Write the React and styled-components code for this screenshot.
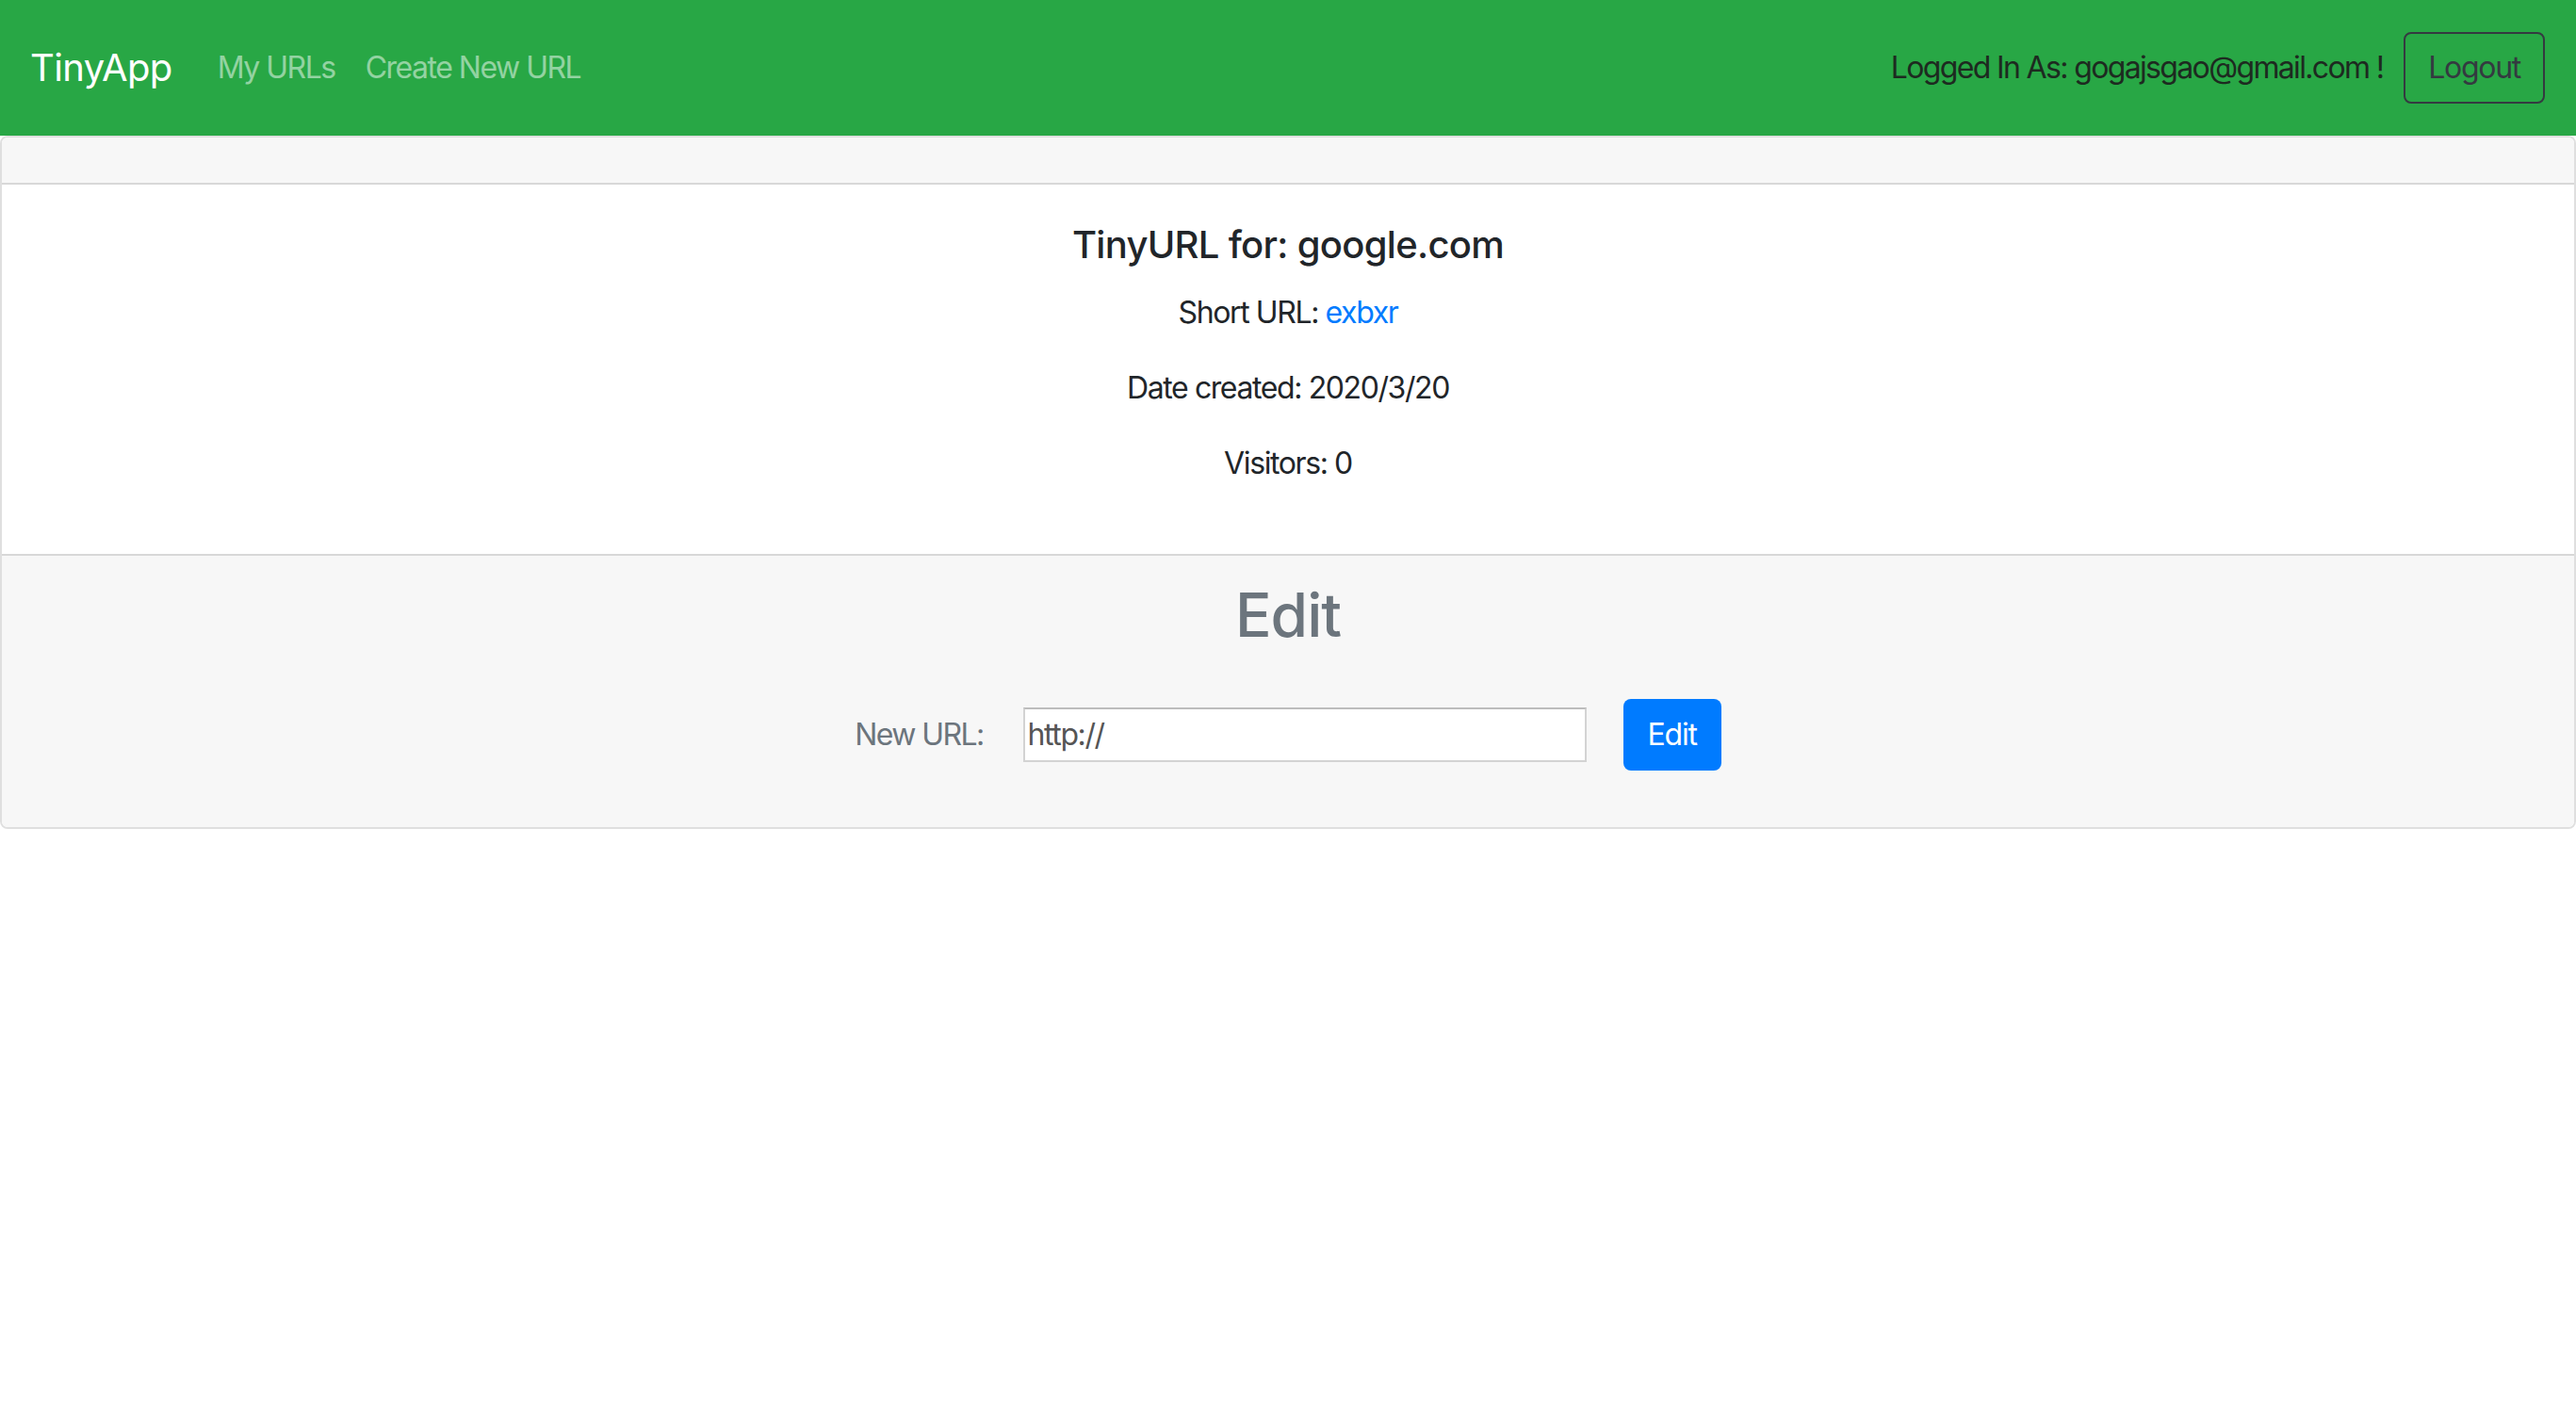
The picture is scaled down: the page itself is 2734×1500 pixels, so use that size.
import React, { useState } from "react";
import styled, { createGlobalStyle } from "styled-components";

const GlobalStyle = createGlobalStyle`
  html, body {
    margin: 0;
    padding: 0;
    background: #ffffff;
  }
  body {
    font-family: Inter, "Noto Sans", "Liberation Sans", sans-serif;
    color: #212529;
    -webkit-font-smoothing: antialiased;
  }
  * {
    box-sizing: border-box;
  }
`;

const Navbar = styled.nav`
  display: flex;
  align-items: center;
  height: 144px;
  padding: 0 33px 0 32px;
  background-color: #28a745;
`;

const Brand = styled.a`
  font-size: 40px;
  line-height: 60px;
  color: #ffffff;
  text-decoration: none;
  margin-right: 32px;
  letter-spacing: -0.6px;
`;

const NavLinks = styled.div`
  display: flex;
`;

const NavLink = styled.a`
  font-size: 32px;
  line-height: 48px;
  padding: 0 16px;
  color: rgba(255, 255, 255, 0.5);
  text-decoration: none;
  letter-spacing: -1.5px;
`;

const NavRight = styled.div`
  margin-left: auto;
  display: flex;
  align-items: center;
  gap: 22px;
`;

const NavText = styled.span`
  font-size: 32px;
  line-height: 48px;
  color: #1d2a20;
  letter-spacing: -1.65px;
`;

const OutlineButton = styled.button`
  font-family: inherit;
  font-size: 32px;
  line-height: 48px;
  height: 76px;
  padding: 0 24px;
  background: transparent;
  color: #343a40;
  border: 2px solid #343a40;
  border-radius: 8px;
  letter-spacing: -1.3px;
  cursor: pointer;
`;

const Card = styled.section`
  border: 2px solid rgba(0, 0, 0, 0.125);
  border-radius: 8px;
  overflow: hidden;
`;

const CardHeader = styled.div`
  height: 50px;
  background-color: #f7f7f7;
  border-bottom: 2px solid rgba(0, 0, 0, 0.125);
`;

const CardBody = styled.div`
  padding: 40px;
  text-align: center;
`;

const Title = styled.h5`
  margin: 0 0 24px;
  font-size: 40px;
  line-height: 48px;
  font-weight: 500;
  letter-spacing: -0.7px;
`;

const Line = styled.p`
  margin: 0 0 32px;
  font-size: 32px;
  line-height: 48px;
  letter-spacing: -1.4px;
`;

const Link = styled.a`
  color: #007bff;
  text-decoration: none;
`;

const CardFooter = styled.div`
  padding: 24px 40px;
  background-color: #f7f7f7;
  border-top: 2px solid rgba(0, 0, 0, 0.125);
  text-align: center;
  color: #6c757d;
`;

const EditHeading = styled.h2`
  margin: 0 0 51px;
  font-size: 64px;
  line-height: 77px;
  font-weight: 500;
  letter-spacing: -1px;
`;

const EditForm = styled.form`
  display: flex;
  justify-content: center;
  align-items: baseline;
  margin-bottom: 36px;
`;

const Label = styled.label`
  font-size: 32px;
  line-height: 48px;
  margin-right: 42px;
  letter-spacing: -1.6px;
`;

const Input = styled.input`
  width: 598px;
  height: 58px;
  padding: 0 3px;
  font-family: inherit;
  font-size: 32px;
  color: #555555;
  background: #ffffff;
  border: 2px solid #d3d3d3;
  border-top-color: #bdbdbd;
  letter-spacing: -1.4px;
  margin-right: 39px;
  outline: none;
`;

const PrimaryButton = styled.button`
  font-family: inherit;
  font-size: 32px;
  line-height: 48px;
  height: 76px;
  padding: 0 26px;
  color: #ffffff;
  background-color: #007bff;
  border: none;
  border-radius: 8px;
  letter-spacing: -1.2px;
  cursor: pointer;
`;

export default function App() {
  const [url, setUrl] = useState("http://");

  return (
    <>
      <GlobalStyle />
      <Navbar>
        <Brand href="#">TinyApp</Brand>
        <NavLinks>
          <NavLink href="#">My URLs</NavLink>
          <NavLink href="#">Create New URL</NavLink>
        </NavLinks>
        <NavRight>
          <NavText>Logged In As: gogajsgao@gmail.com !</NavText>
          <OutlineButton type="button">Logout</OutlineButton>
        </NavRight>
      </Navbar>
      <Card>
        <CardHeader />
        <CardBody>
          <Title>TinyURL for: google.com</Title>
          <Line>
            Short URL: <Link href="#">exbxr</Link>
          </Line>
          <Line>Date created: 2020/3/20</Line>
          <Line>Visitors: 0</Line>
        </CardBody>
        <CardFooter>
          <EditHeading>Edit</EditHeading>
          <EditForm onSubmit={(e) => e.preventDefault()}>
            <Label htmlFor="longURL">New URL:</Label>
            <Input
              id="longURL"
              type="text"
              value={url}
              onChange={(e) => setUrl(e.target.value)}
            />
            <PrimaryButton type="submit">Edit</PrimaryButton>
          </EditForm>
        </CardFooter>
      </Card>
    </>
  );
}
